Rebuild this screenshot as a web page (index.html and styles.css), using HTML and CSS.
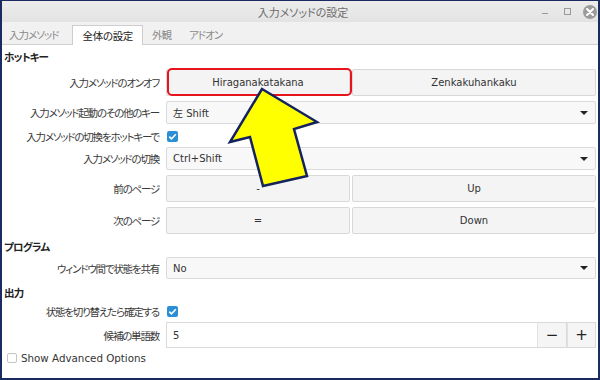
FILE: index.html
```html
<!DOCTYPE html>
<html lang="ja">
<head>
<meta charset="utf-8">
<title>入力メソッドの設定</title>
<link rel="stylesheet" href="styles.css">
</head>
<body>
<div class="frame">
  <div class="window">
    <div class="titlebar">
      <span class="title">入力メソッドの設定</span>
      <svg class="controls" width="56" height="21" viewBox="0 0 56 21">
        <line x1="0" y1="12.5" x2="6" y2="12.5" stroke="#9a9a9a" stroke-width="1"/>
        <rect x="22.5" y="7.5" width="6" height="6" fill="none" stroke="#9a9a9a" stroke-width="1"/>
        <circle cx="48" cy="11" r="7" fill="#9b9b9b"/>
        <path d="M45 8 L51 14 M51 8 L45 14" stroke="#fff" stroke-width="2" stroke-linecap="round"/>
      </svg>
    </div>
    <div class="tabs">
      <span class="tab first">入力メソッド</span>
      <span class="tab active">全体の設定</span>
      <span class="tab">外観</span>
      <span class="tab">アドオン</span>
    </div>
    <div class="content">
      <div class="section s-hotkey">ホットキー</div>

      <div class="row h27 mt5">
        <span class="label">入力メソッドのオンオフ</span>
        <div class="pair">
          <span class="btn">Hiraganakatakana</span>
          <span class="btn">Zenkakuhankaku</span>
        </div>
      </div>

      <div class="row h23 mt5">
        <span class="label">入力メソッド起動のその他のキー</span>
        <div class="combo"><span>左 Shift</span><span class="caret"></span></div>
      </div>

      <div class="row h13 mt5">
        <span class="label">入力メソッドの切換をホットキーで</span>
        <div><span class="check on"><svg width="11" height="11" viewBox="0 0 11 11"><path d="M2.3 5.6 L4.5 7.8 L8.8 3.3" fill="none" stroke="#fff" stroke-width="1.6"/></svg></span></div>
      </div>

      <div class="row h23 mt5">
        <span class="label">入力メソッドの切換</span>
        <div class="combo"><span>Ctrl+Shift</span><span class="caret"></span></div>
      </div>

      <div class="row h27 mt5">
        <span class="label">前のページ</span>
        <div class="pair">
          <span class="btn">-</span>
          <span class="btn">Up</span>
        </div>
      </div>

      <div class="row h27 mt5">
        <span class="label">次のページ</span>
        <div class="pair">
          <span class="btn">=</span>
          <span class="btn">Down</span>
        </div>
      </div>

      <div class="section s-program">プログラム</div>

      <div class="row h22 mt3">
        <span class="label">ウィンドウ間で状態を共有</span>
        <div class="combo"><span>No</span><span class="caret"></span></div>
      </div>

      <div class="section s-output">出力</div>

      <div class="row h12 mt4">
        <span class="label">状態を切り替えたら確定する</span>
        <div><span class="check on"><svg width="11" height="11" viewBox="0 0 11 11"><path d="M2.3 5.6 L4.5 7.8 L8.8 3.3" fill="none" stroke="#fff" stroke-width="1.6"/></svg></span></div>
      </div>

      <div class="row h26 mt6">
        <span class="label">候補の単語数</span>
        <div class="spin">
          <span class="spin-input">5</span>
          <span class="spin-btn">−</span>
          <span class="spin-btn">+</span>
        </div>
      </div>

      <div class="advanced">
        <span class="check off"></span>
        <span>Show Advanced Options</span>
      </div>
    </div>
  </div>

  <div class="highlight"></div>
  <svg class="arrow" width="600" height="380" viewBox="0 0 600 380">
    <polygon points="262,89 317,122 294,129 307,176 263,186 250,137 230,142" fill="#ffff00" stroke="#14235e" stroke-width="2.5" stroke-linejoin="miter"/>
  </svg>
</div>
</body>
</html>
```

FILE: styles.css
```css
html, body {
  margin: 0;
  padding: 0;
}

body {
  width: 600px;
  height: 380px;
  overflow: hidden;
  font-family: "DejaVu Sans", "Noto Sans CJK JP", sans-serif;
  font-size: 10px;
  color: #333;
}

.frame {
  position: relative;
  width: 600px;
  height: 380px;
  box-sizing: border-box;
  padding: 1px 2px 2px 2px;
  background: #1b2b62;
}

.window {
  height: 100%;
  background: #fff;
  display: flex;
  flex-direction: column;
}

.titlebar {
  height: 21px;
  flex: none;
  background: linear-gradient(#ececec, #e3e3e3);
  display: grid;
  grid-template-columns: 1fr auto 1fr;
  align-items: center;
}

.title {
  grid-column: 2;
  font-family: "Noto Sans CJK JP", sans-serif;
  font-feature-settings: "palt";
  font-size: 11px;
  color: #6d6d6d;
  padding-left: 6px;
}

.controls {
  grid-column: 3;
  justify-self: end;
  display: block;
}

.tabs {
  height: 22px;
  flex: none;
  background: #f1f1f1;
  border-bottom: 1px solid #cfcfcf;
  display: flex;
  align-items: flex-end;
  font-family: "Noto Sans CJK JP", sans-serif;
  font-feature-settings: "palt";
}

.tab {
  height: 19px;
  line-height: 19px;
  padding: 0 9px;
  color: #8a8a8a;
  font-size: 10.5px;
  letter-spacing: -1px;
  box-sizing: border-box;
}

.tab.first {
  padding-left: 7px;
  margin-right: 5px;
}

.tab.active {
  background: #fff;
  color: #222;
  border: 1px solid #cdcdcd;
  border-bottom: none;
  height: 20px;
  line-height: 19px;
  margin-bottom: -1px;
  letter-spacing: -0.3px;
}

.content {
  flex: 1;
  display: flex;
  flex-direction: column;
  padding-right: 2px;
}

.section {
  height: 14px;
  line-height: 14px;
  padding-left: 2px;
  font-family: "Noto Sans CJK JP", sans-serif;
  font-feature-settings: "palt";
  font-weight: bold;
  font-size: 10.5px;
  letter-spacing: -0.8px;
  color: #222;
}

.s-hotkey { margin-top: 5px; }
.s-program { margin-top: 6px; }
.s-output { margin-top: 7px; }

.row {
  display: grid;
  grid-template-columns: 158px 1fr;
  column-gap: 6px;
  align-items: center;
}

.h12 { height: 12px; }
.h13 { height: 13px; }
.h22 { height: 22px; }
.h23 { height: 23px; }
.h26 { height: 26px; }
.h27 { height: 27px; }

.mt3 { margin-top: 3px; }
.mt4 { margin-top: 4px; }
.mt5 { margin-top: 5px; }
.mt6 { margin-top: 6px; }

.row > * {
  height: 100%;
}

.label {
  display: flex;
  align-items: center;
  justify-content: flex-end;
  font-family: "Noto Sans CJK JP", sans-serif;
  font-feature-settings: "palt";
  font-size: 10.5px;
  letter-spacing: -1.2px;
  padding-right: 1px;
  color: #3a3a3a;
  white-space: nowrap;
}

.row > div {
  display: flex;
  align-items: center;
}

.pair {
  display: grid !important;
  grid-template-columns: 184px 1fr;
  column-gap: 2px;
}

.btn {
  display: flex;
  align-items: center;
  justify-content: center;
  background: #f4f4f4;
  border: 1px solid #d8d8d8;
  border-radius: 2px;
  box-sizing: border-box;
  height: 100%;
  color: #333;
}

.combo {
  box-sizing: border-box;
  border: 1px solid #dadada;
  border-radius: 2px;
  background: #f8f8f8;
  padding: 0 7px 0 6px;
  justify-content: space-between;
  font-family: "DejaVu Sans", "Noto Sans CJK JP", sans-serif;
  color: #333;
}

.caret {
  width: 0;
  height: 0;
  border-left: 4px solid transparent;
  border-right: 4px solid transparent;
  border-top: 4px solid #222;
}

.check {
  display: inline-block;
  width: 11px;
  height: 11px;
  box-sizing: border-box;
  border-radius: 2px;
  margin-left: 1px;
}

.check svg {
  display: block;
}

.check.on {
  background: #2b8fd6;
}

.check.off {
  width: 10px;
  height: 10px;
  background: #fff;
  border: 1px solid #c4c4c4;
  margin-left: 0;
}

.spin {
  display: grid !important;
  grid-template-columns: 1fr 30px 29px;
}

.spin-input {
  height: 100%;
  box-sizing: border-box;
  border: 1px solid #dadada;
  border-right: none;
  background: #fff;
  display: flex;
  align-items: center;
  padding-left: 6px;
}

.spin-btn {
  height: 100%;
  box-sizing: border-box;
  border: 1px solid #dadada;
  border-left: 1px solid #e2e2e2;
  background: #f5f5f5;
  display: flex;
  align-items: center;
  justify-content: center;
  font-size: 15px;
  color: #222;
}

.advanced {
  margin-top: 4px;
  height: 12px;
  display: flex;
  align-items: center;
  gap: 4px;
  padding-left: 5px;
  font-size: 10.3px;
  color: #333;
}

.highlight {
  position: absolute;
  left: 167px;
  top: 68px;
  width: 185px;
  height: 28px;
  box-sizing: border-box;
  border: 2px solid #e8141c;
  border-radius: 5px;
}

.arrow {
  position: absolute;
  left: 0;
  top: 0;
  pointer-events: none;
}
```
